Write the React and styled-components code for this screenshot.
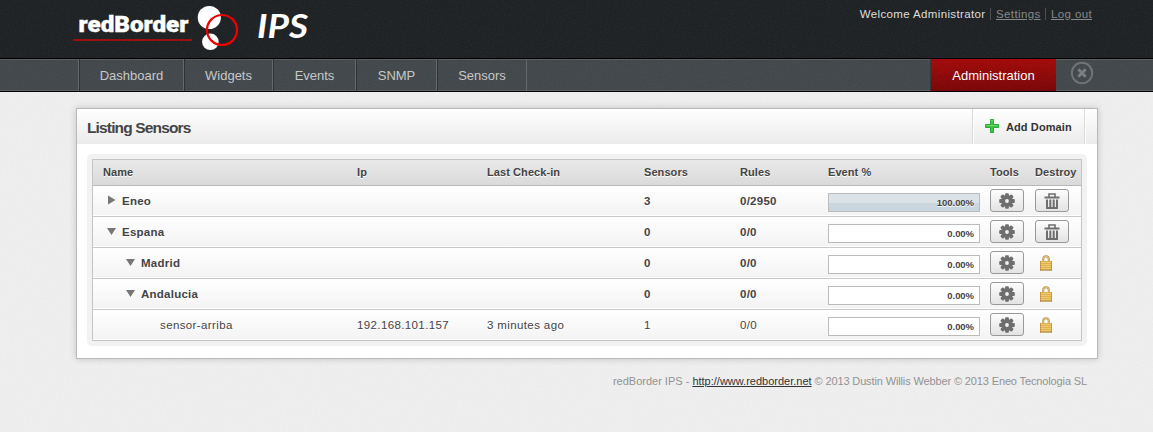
import React from 'react';
import styled, { createGlobalStyle } from 'styled-components';

const GlobalStyle = createGlobalStyle`
  *, *::before, *::after { box-sizing: border-box; }
  body {
    margin: 0;
    background: #f0f0f0;
    font-family: "Liberation Sans", Arial, sans-serif;
    font-size: 11.5px;
    color: #444;
    overflow: hidden;
  }
`;

const Page = styled.div`
  position: relative;
  height: 432px;
`;

const Grain = styled.svg`
  position: absolute;
  inset: 0;
  width: 100%;
  height: 100%;
  opacity: ${p => p.$strength};
  pointer-events: none;
`;

const Header = styled.header`
  position: relative;
  height: 58px;
  padding: 0 61px 0 73px;
  display: flex;
  justify-content: space-between;
  background: #1a1e20;
`;

const Logo = styled.svg`
  position: relative;
  display: block;
  width: 240px;
  height: 58px;
`;

const UserLinks = styled.div`
  position: relative;
  display: flex;
  align-items: center;
  height: 14px;
  margin-top: 7px;
  letter-spacing: 0.37px;
  white-space: nowrap;
  color: #dedede;
`;

const UserLink = styled.a`
  margin-left: 4px;
  padding-left: 5.5px;
  border-left: 1px solid #4b4f51;
  line-height: 12px;
  color: #868989;
  text-decoration: underline;
`;

const Nav = styled.nav`
  position: relative;
  display: flex;
  height: 34px;
  padding: 0 59px 0 78px;
  border-top: 1px solid #000;
  border-bottom: 1px solid #000;
  background: #3f4548;
  box-shadow: inset 0 1px #575b5d, inset 0 -1px #5a5d5e;
`;

const NavGroup = styled.div`
  display: flex;
  margin-right: auto;
  border-left: 1px solid #646566;
`;

const NavItem = styled.a`
  width: ${p => p.$width}px;
  line-height: 33px;
  text-align: center;
  font-size: 13px;
  color: #c6c9ca;
  border-left: 1px solid #2a2d2f;
  border-right: 1px solid #646566;
`;

const AdminItem = styled.a`
  width: 126px;
  line-height: 33px;
  text-align: center;
  font-size: 13px;
  color: #fff;
  border-left: 1px solid #303436;
  background: linear-gradient(#a30505, #770202);
`;

const CloseIcon = styled.svg`
  width: 24px;
  height: 24px;
  margin: 2px 0 0 14px;
`;

const Panel = styled.section`
  position: relative;
  width: 1022px;
  height: 251px;
  margin: 16px 0 0 76px;
  border: 1px solid #b9b9b9;
  background: #fff;
  box-shadow: 0 0 7px rgba(0, 0, 0, 0.18);
`;

const PanelHeader = styled.div`
  display: flex;
  justify-content: space-between;
  height: 35px;
  padding: 0 12px 0 10px;
  background: linear-gradient(#fff, #ebebeb);
`;

const Title = styled.h1`
  margin: 0;
  font-size: 15.5px;
  line-height: 37px;
  letter-spacing: -0.85px;
  color: #444;
`;

const AddButton = styled.a`
  display: flex;
  align-items: center;
  width: 113px;
  padding: 1px 0 0 11px;
  gap: 6px;
  border-left: 1px solid #d9d9d9;
  border-right: 1px solid #d9d9d9;
  box-shadow: inset 1px 0 #fff, 1px 0 #fff;
  font-size: 11px;
  font-weight: bold;
  letter-spacing: 0.1px;
  color: #333;
  white-space: nowrap;

  svg { margin-bottom: 2px; }
`;

const TableFrame = styled.div`
  margin: 10px 10px 0;
  padding: 5px;
  border-radius: 5px;
  background: #f2f2f2;
`;

const Table = styled.div`
  border: 1px solid #c4c4c4;
`;

const Row = styled.div`
  display: grid;
  grid-template-columns: 254px 130px 157px 96px 88px 162px 45px 1fr;
  align-items: center;
  height: ${p => (p.$head ? 26 : 31)}px;
  padding: 0 0 ${p => (p.$head ? 1 : 0)}px 10px;
  border-bottom: 1px solid ${p => (p.$head ? '#b8b8b8' : '#c9c9c9')};
  background: ${p => (p.$head ? 'linear-gradient(#e9e9e9, #dadada)' : 'linear-gradient(#fff, #f3f3f3)')};
  box-shadow: ${p => (p.$head ? 'none' : 'inset 0 -1px #fff')};
  font-size: ${p => (p.$head ? 11 : 11.5)}px;
  font-weight: ${p => (p.$bold || p.$head ? 'bold' : 'normal')};
  letter-spacing: ${p => (p.$head ? 0.08 : p.$bold ? 0.25 : 0.38)}px;
  text-shadow: 0 1px #fff;
  white-space: nowrap;
  color: #444;

  &:last-child { border-bottom: 0; height: 30px; }
`;

const NameCell = styled.div`
  display: flex;
  align-items: center;
  padding-left: ${p => p.$depth * 19}px;
`;

const Arrow = styled.svg`
  width: 9px;
  height: 10px;
  margin: 0 6px 2px 4px;
`;

const Spacer = styled.span`
  width: 19px;
`;

const Meter = styled.div`
  width: 152px;
  height: 19px;
  margin-top: 2px;
  padding-right: 5px;
  border: 1px solid #bbb;
  background: ${p => (p.$full ? 'linear-gradient(#dce3e8 50%, #cad6de 50%)' : '#fff')};
  text-align: right;
  font-size: 9.5px;
  font-weight: bold;
  letter-spacing: -0.05px;
  line-height: 18px;
`;

const IconButton = styled.button`
  display: flex;
  align-items: center;
  justify-content: center;
  width: 34px;
  height: 23px;
  margin: 0 0 2px;
  padding: 1px 0 0;
  border: 1px solid #999;
  border-radius: 3px;
  background: linear-gradient(#fdfdfd, #e3e3e3);
`;

const LockSlot = styled.div`
  display: flex;
  padding-left: 5px;
`;

const Footer = styled.footer`
  position: relative;
  margin: 16px 66px 0 0;
  text-align: right;
  font-size: 11px;
  line-height: 13px;
  color: #929292;
`;

const FooterLink = styled.a`
  color: #333;
  text-decoration: underline;
`;

const Copyright = styled.span`
  letter-spacing: -0.13px;
`;

function Noise({ id, strength }) {
  return (
    <Grain $strength={strength} aria-hidden="true">
      <filter id={id}>
        <feTurbulence type="fractalNoise" baseFrequency="0.7" numOctaves="2" />
        <feColorMatrix type="saturate" values="0" />
      </filter>
      <rect width="100%" height="100%" filter={`url(#${id})`} />
    </Grain>
  );
}

function BrandLogo() {
  return (
    <Logo viewBox="73 0 240 58">
      <text x="78.500" y="32" fill="#fff" stroke="#fff" strokeWidth="0.400" fontFamily="Roboto, sans-serif" fontWeight="900" fontSize="21.500" textLength="110" lengthAdjust="spacingAndGlyphs">redBorder</text>
      <rect x="73" y="39" width="119" height="2" fill="#9c1010" />
      <circle cx="209.300" cy="17.500" r="11.600" fill="#fff" />
      <circle cx="210.400" cy="41.800" r="8.300" fill="#fff" />
      <circle cx="222" cy="30" r="15" fill="none" stroke="#f00000" strokeWidth="2.200" />
      <text x="257" y="38" fill="#fff" fontFamily="Lato, sans-serif" fontStyle="italic" fontWeight="700" fontSize="33" textLength="51" lengthAdjust="spacingAndGlyphs">IPS</text>
    </Logo>
  );
}

function Gear() {
  return (
    <svg width="16" height="16" viewBox="0 0 16 16">
      <g fill="#6e6e6e">
        {[0, 45, 90, 135].map(a => (
          <rect key={a} x="6.100" y="0.200" width="3.800" height="15.600" rx="1" transform={`rotate(${a} 8 8)`} />
        ))}
        <circle cx="8" cy="8" r="5.900" />
      </g>
      <circle cx="8" cy="8" r="1.900" fill="#f2f2f2" />
    </svg>
  );
}

function Trash() {
  return (
    <svg width="16" height="16" viewBox="0 0 16 16">
      <path d="M5 4.500V1h6v3.500" fill="none" stroke="#6e6e6e" strokeWidth="1.600" />
      <path d="M0.500 4.500h15" stroke="#6e6e6e" strokeWidth="2" />
      <path d="M3 6.500v9M6.300 6.500v9M9.700 6.500v9M13 6.500v9" stroke="#6e6e6e" strokeWidth="2" />
      <path d="M2 15h12" stroke="#6e6e6e" strokeWidth="2" />
    </svg>
  );
}

function Lock() {
  return (
    <svg width="12" height="16" viewBox="0 0 12 16">
      <path d="M3.200 7V4a2.800 2.800 0 0 1 5.600 0V7" fill="none" stroke="#b8924a" strokeWidth="2" />
      <path d="M3.200 7V4a2.800 2.800 0 0 1 5.600 0V7" fill="none" stroke="#e3c583" strokeWidth="0.900" />
      <rect y="6" width="12" height="9.500" rx="0.500" fill="#f0ca6a" />
      <path d="M0 6.500h12M0 8.500h12M0 10.500h12M0 12.500h12" stroke="#d9ab4c" strokeWidth="0.800" />
      <path d="M0 15h12" stroke="#a3783a" />
      <path d="M0.500 6v9.500M11.500 6v9.500" stroke="#b07c36" strokeOpacity="0.600" />
    </svg>
  );
}

function Plus() {
  return (
    <svg width="16" height="16" viewBox="0 0 16 16">
      <path d="M6.500 1.500h3V6.500h5v3H9.500v5H6.500V9.500H1.500V6.500H6.500z" fill="#3fc63c" stroke="#27a840" />
      <path d="M7 2.500h2M2.500 7.500h11" stroke="#6fd968" />
    </svg>
  );
}

const NAV = [['Dashboard', 105], ['Widgets', 89], ['Events', 83], ['SNMP', 81], ['Sensors', 90]];

const ROWS = [
  { name: 'Eneo', depth: 0, arrow: 'right', sensors: '3', rules: '0/2950', pct: '100.00%', trash: true },
  { name: 'Espana', depth: 0, arrow: 'down', sensors: '0', rules: '0/0', pct: '0.00%', trash: true },
  { name: 'Madrid', depth: 1, arrow: 'down', sensors: '0', rules: '0/0', pct: '0.00%' },
  { name: 'Andalucia', depth: 1, arrow: 'down', sensors: '0', rules: '0/0', pct: '0.00%' },
  { name: 'sensor-arriba', depth: 2, ip: '192.168.101.157', seen: '3 minutes ago', sensors: '1', rules: '0/0', pct: '0.00%' },
];

const COLUMNS = ['Name', 'Ip', 'Last Check-in', 'Sensors', 'Rules', 'Event %', 'Tools', 'Destroy'];

function SensorRow({ row }) {
  return (
    <Row $bold={!!row.arrow}>
      <NameCell $depth={row.depth}>
        {row.arrow ? (
          <Arrow viewBox="0 0 9 10">
            <path d={row.arrow === 'right' ? 'M1 0.500v9l7.500-4.500z' : 'M0 2h9L4.500 9z'} fill="#777" />
          </Arrow>
        ) : <Spacer />}
        {row.name}
      </NameCell>
      <span>{row.ip}</span>
      <span>{row.seen}</span>
      <span>{row.sensors}</span>
      <span>{row.rules}</span>
      <Meter $full={row.pct === '100.00%'}>{row.pct}</Meter>
      <IconButton aria-label="Tools"><Gear /></IconButton>
      {row.trash
        ? <IconButton aria-label="Destroy"><Trash /></IconButton>
        : <LockSlot><Lock /></LockSlot>}
    </Row>
  );
}

export default function App() {
  return (
    <Page>
      <GlobalStyle />
      <Noise id="page-grain" strength={0.08} />
      <Header>
        <Noise id="header-grain" strength={0.08} />
        <BrandLogo />
        <UserLinks>
          <span>Welcome Administrator</span>
          <UserLink>Settings</UserLink>
          <UserLink>Log out</UserLink>
        </UserLinks>
      </Header>
      <Nav>
        <NavGroup>
          {NAV.map(([label, width]) => <NavItem key={label} $width={width}>{label}</NavItem>)}
        </NavGroup>
        <AdminItem>Administration</AdminItem>
        <CloseIcon viewBox="0 0 24 24">
          <circle cx="12" cy="12" r="10.200" fill="none" stroke="#6c7073" strokeWidth="2" />
          <path d="M8.300 8.300l7.400 7.400M15.700 8.300l-7.400 7.400" stroke="#797d7f" strokeWidth="2.800" />
        </CloseIcon>
        <Noise id="nav-grain" strength={0.08} />
      </Nav>
      <Panel>
        <PanelHeader>
          <Title>Listing Sensors</Title>
          <AddButton><Plus />Add Domain</AddButton>
        </PanelHeader>
        <TableFrame>
          <Table>
            <Row $head>{COLUMNS.map(c => <span key={c}>{c}</span>)}</Row>
            {ROWS.map(row => <SensorRow key={row.name} row={row} />)}
          </Table>
        </TableFrame>
      </Panel>
      <Footer>
        redBorder IPS - <FooterLink>http://www.redborder.net</FooterLink>
        <Copyright> © 2013 Dustin Willis Webber © 2013 Eneo Tecnologia SL</Copyright>
      </Footer>
    </Page>
  );
}
